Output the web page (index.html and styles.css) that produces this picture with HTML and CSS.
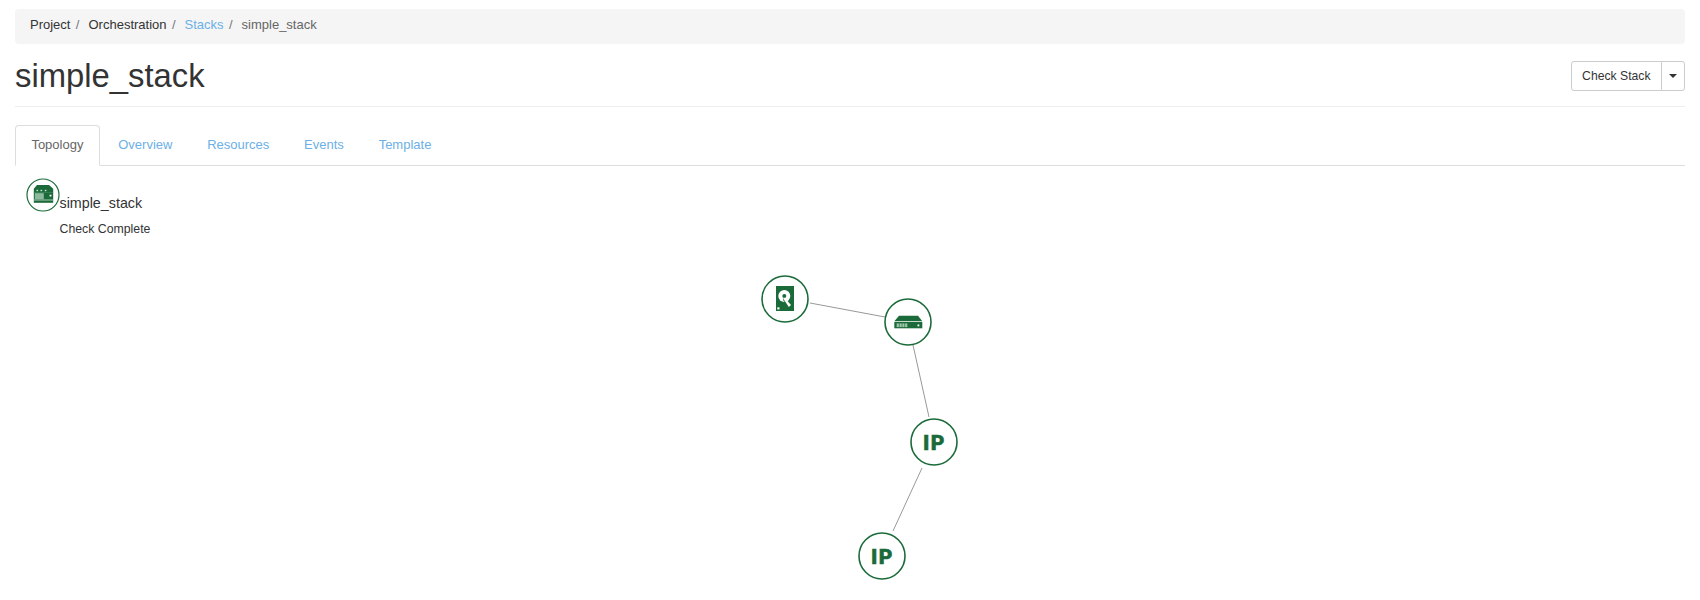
FILE: index.html
```html
<!DOCTYPE html>
<html lang="en">
<head>
    <meta charset="UTF-8">
    <meta name="viewport" content="width=device-width, initial-scale=1.0">
    <title>simple_stack</title>
    <link rel="stylesheet" href="styles.css">
</head>
<body>
    <div class="container">
        <ol class="breadcrumb">
            <li>Project</li>
            <li>Orchestration</li>
            <li><a href="#">Stacks</a></li>
            <li class="active">simple_stack</li>
        </ol>

        <div class="page-header">
            <h1>simple_stack</h1>
            <div class="btn-group">
                <button class="btn">Check Stack</button>
                <button class="btn btn-caret"><span class="caret"></span></button>
            </div>
        </div>

        <ul class="nav-tabs">
            <li class="active"><a href="#">Topology</a></li>
            <li><a href="#">Overview</a></li>
            <li><a href="#">Resources</a></li>
            <li><a href="#">Events</a></li>
            <li><a href="#">Template</a></li>
        </ul>

        <div class="stack-info">
            <svg class="stack-icon" width="34" height="34" viewBox="0 0 34 34">
                <circle cx="17" cy="17" r="16" fill="#fff" stroke="#1b6b3a" stroke-width="1.2"/>
                <path d="M11 7h12l4.200 3.800v4H7.800v-4z" fill="#1b6b3a"/>
                <rect x="7.800" y="14.500" width="19.400" height="10.300" fill="#1b6b3a"/>
                <rect x="8.800" y="15.200" width="9" height="6" fill="#8dba9d"/>
                <rect x="10.500" y="11.800" width="1.600" height="1.400" fill="#cfe2d6"/>
                <rect x="14.500" y="11.800" width="1.600" height="1.400" fill="#cfe2d6"/>
                <rect x="18.800" y="11.800" width="1.600" height="1.400" fill="#cfe2d6"/>
                <rect x="23.600" y="16.700" width="1.800" height="1.800" fill="#fff"/>
                <rect x="7.800" y="21.600" width="19.400" height="0.800" fill="#cfe2d6"/>
            </svg>
            <div class="stack-text">
                <div class="stack-name">simple_stack</div>
                <div class="stack-status">Check Complete</div>
            </div>
        </div>

        <svg class="topology" width="1670" height="350" viewBox="0 0 1670 350">
            <g class="links">
                <line x1="795" y1="63" x2="870" y2="77"/>
                <line x1="898" y1="105" x2="914" y2="177"/>
                <line x1="907" y1="228" x2="878" y2="291"/>
            </g>
            <g class="node">
                <circle cx="770" cy="59" r="23"/>
                <rect class="fill" x="761" y="46" width="18" height="25"/>
                <circle class="cut" cx="769.300" cy="56" r="6"/>
                <circle class="fill" cx="769.300" cy="56" r="2"/>
                <path class="fill" d="M769 57.500l7 8.500-1.500 1.500-6.500-7.500z"/>
                <path class="cut" d="M769.500 57.500l6.500 7.500-2.200 2-5.300-8z"/>
                <rect class="cut" x="762.300" y="67.300" width="2.200" height="2.200"/>
            </g>
            <g class="node">
                <circle cx="893" cy="82" r="23"/>
                <path class="fill" d="M884 75.700h19l4.300 5.600h-28z"/>
                <rect class="fill" x="879.300" y="82" width="28" height="6.300"/>
                <rect class="grill" x="881.700" y="83.400" width="2.200" height="3.700"/>
                <rect class="grill" x="884.500" y="83.400" width="2.200" height="3.700"/>
                <rect class="grill" x="887.300" y="83.400" width="2.200" height="3.700"/>
                <rect class="grill" x="890.100" y="83.400" width="2.200" height="3.700"/>
                <rect class="cut" x="902.500" y="84.500" width="1.800" height="1.800"/>
            </g>
            <g class="node">
                <circle cx="919" cy="202" r="23"/>
                <text x="919.500" y="210">IP</text>
            </g>
            <g class="node">
                <circle cx="867" cy="316" r="23"/>
                <text x="867.500" y="324">IP</text>
            </g>
        </svg>
    </div>
</body>
</html>
```

FILE: styles.css
```css
* {
    box-sizing: border-box;
}

body {
    font-family: "Liberation Sans", Arial, sans-serif;
    font-size: 13px;
    line-height: 1.428;
    color: #333333;
    background-color: #ffffff;
    margin: 0;
    padding: 0;
}

a {
    color: #6cb0e6;
    text-decoration: none;
}

.container {
    padding: 9px 15px 0;
}

.breadcrumb {
    display: flex;
    list-style: none;
    margin: 0;
    padding: 7px 15px 9px;
    background-color: #f5f5f5;
    border-radius: 4px;
}

.breadcrumb li:not(:last-child)::after {
    content: "/\00a0";
    padding: 0 5.4px;
    color: #777777;
}

.breadcrumb .active {
    color: #666666;
}

.page-header {
    display: flex;
    justify-content: space-between;
    align-items: center;
    height: 63px;
    padding-top: 3px;
    border-bottom: 1px solid #eeeeee;
    margin-bottom: 18px;
}

h1 {
    font-size: 32.8px;
    font-weight: 400;
    line-height: 1.1;
    margin: 0;
}

.btn-group {
    display: flex;
}

.btn {
    font-family: inherit;
    font-size: 12.2px;
    line-height: 18px;
    color: #333333;
    background-color: #ffffff;
    border: 1px solid #cccccc;
    border-radius: 3px 0 0 3px;
    padding: 5px 10.5px;
    height: 30px;
}

.btn-caret {
    display: flex;
    align-items: center;
    margin-left: -1px;
    padding: 0 7px;
    border-radius: 0 3px 3px 0;
}

.caret {
    width: 0;
    height: 0;
    border-top: 4px solid #333333;
    border-left: 4px solid transparent;
    border-right: 4px solid transparent;
}

.nav-tabs {
    display: flex;
    list-style: none;
    margin: 0;
    padding: 0;
    border-bottom: 1px solid #dddddd;
}

.nav-tabs li {
    margin-right: 2px;
    margin-bottom: -1px;
}

.nav-tabs a {
    display: block;
    padding: 10.5px 15.4px;
    border: 1px solid transparent;
    border-radius: 4px 4px 0 0;
}

.nav-tabs .active a {
    color: #666666;
    background-color: #ffffff;
    border-color: #dddddd #dddddd transparent;
}

.stack-info {
    display: flex;
    padding: 12px 0 0 10.5px;
    height: 74px;
}

.stack-icon {
    display: block;
    flex-shrink: 0;
}

.stack-text {
    padding-top: 14px;
}

.stack-name {
    font-size: 14.3px;
    line-height: 22px;
    color: #333333;
}

.stack-status {
    font-size: 12.3px;
    line-height: 18px;
    margin-top: 6px;
}

.topology {
    display: block;
}

.links line {
    stroke: #999999;
    stroke-width: 1;
}

.node circle {
    fill: #ffffff;
    stroke: #1b6b3a;
    stroke-width: 1.6;
}

.node .fill {
    fill: #1b6b3a;
    stroke: none;
}

.node .cut {
    fill: #ffffff;
    stroke: none;
}

.node .grill {
    fill: #9cc4aa;
}

.node text {
    font-family: Roboto, sans-serif;
    font-size: 21px;
    font-weight: 900;
    letter-spacing: 1.6px;
    fill: #1b6b3a;
    stroke: #1b6b3a;
    stroke-width: 0.5;
    text-anchor: middle;
}
```
